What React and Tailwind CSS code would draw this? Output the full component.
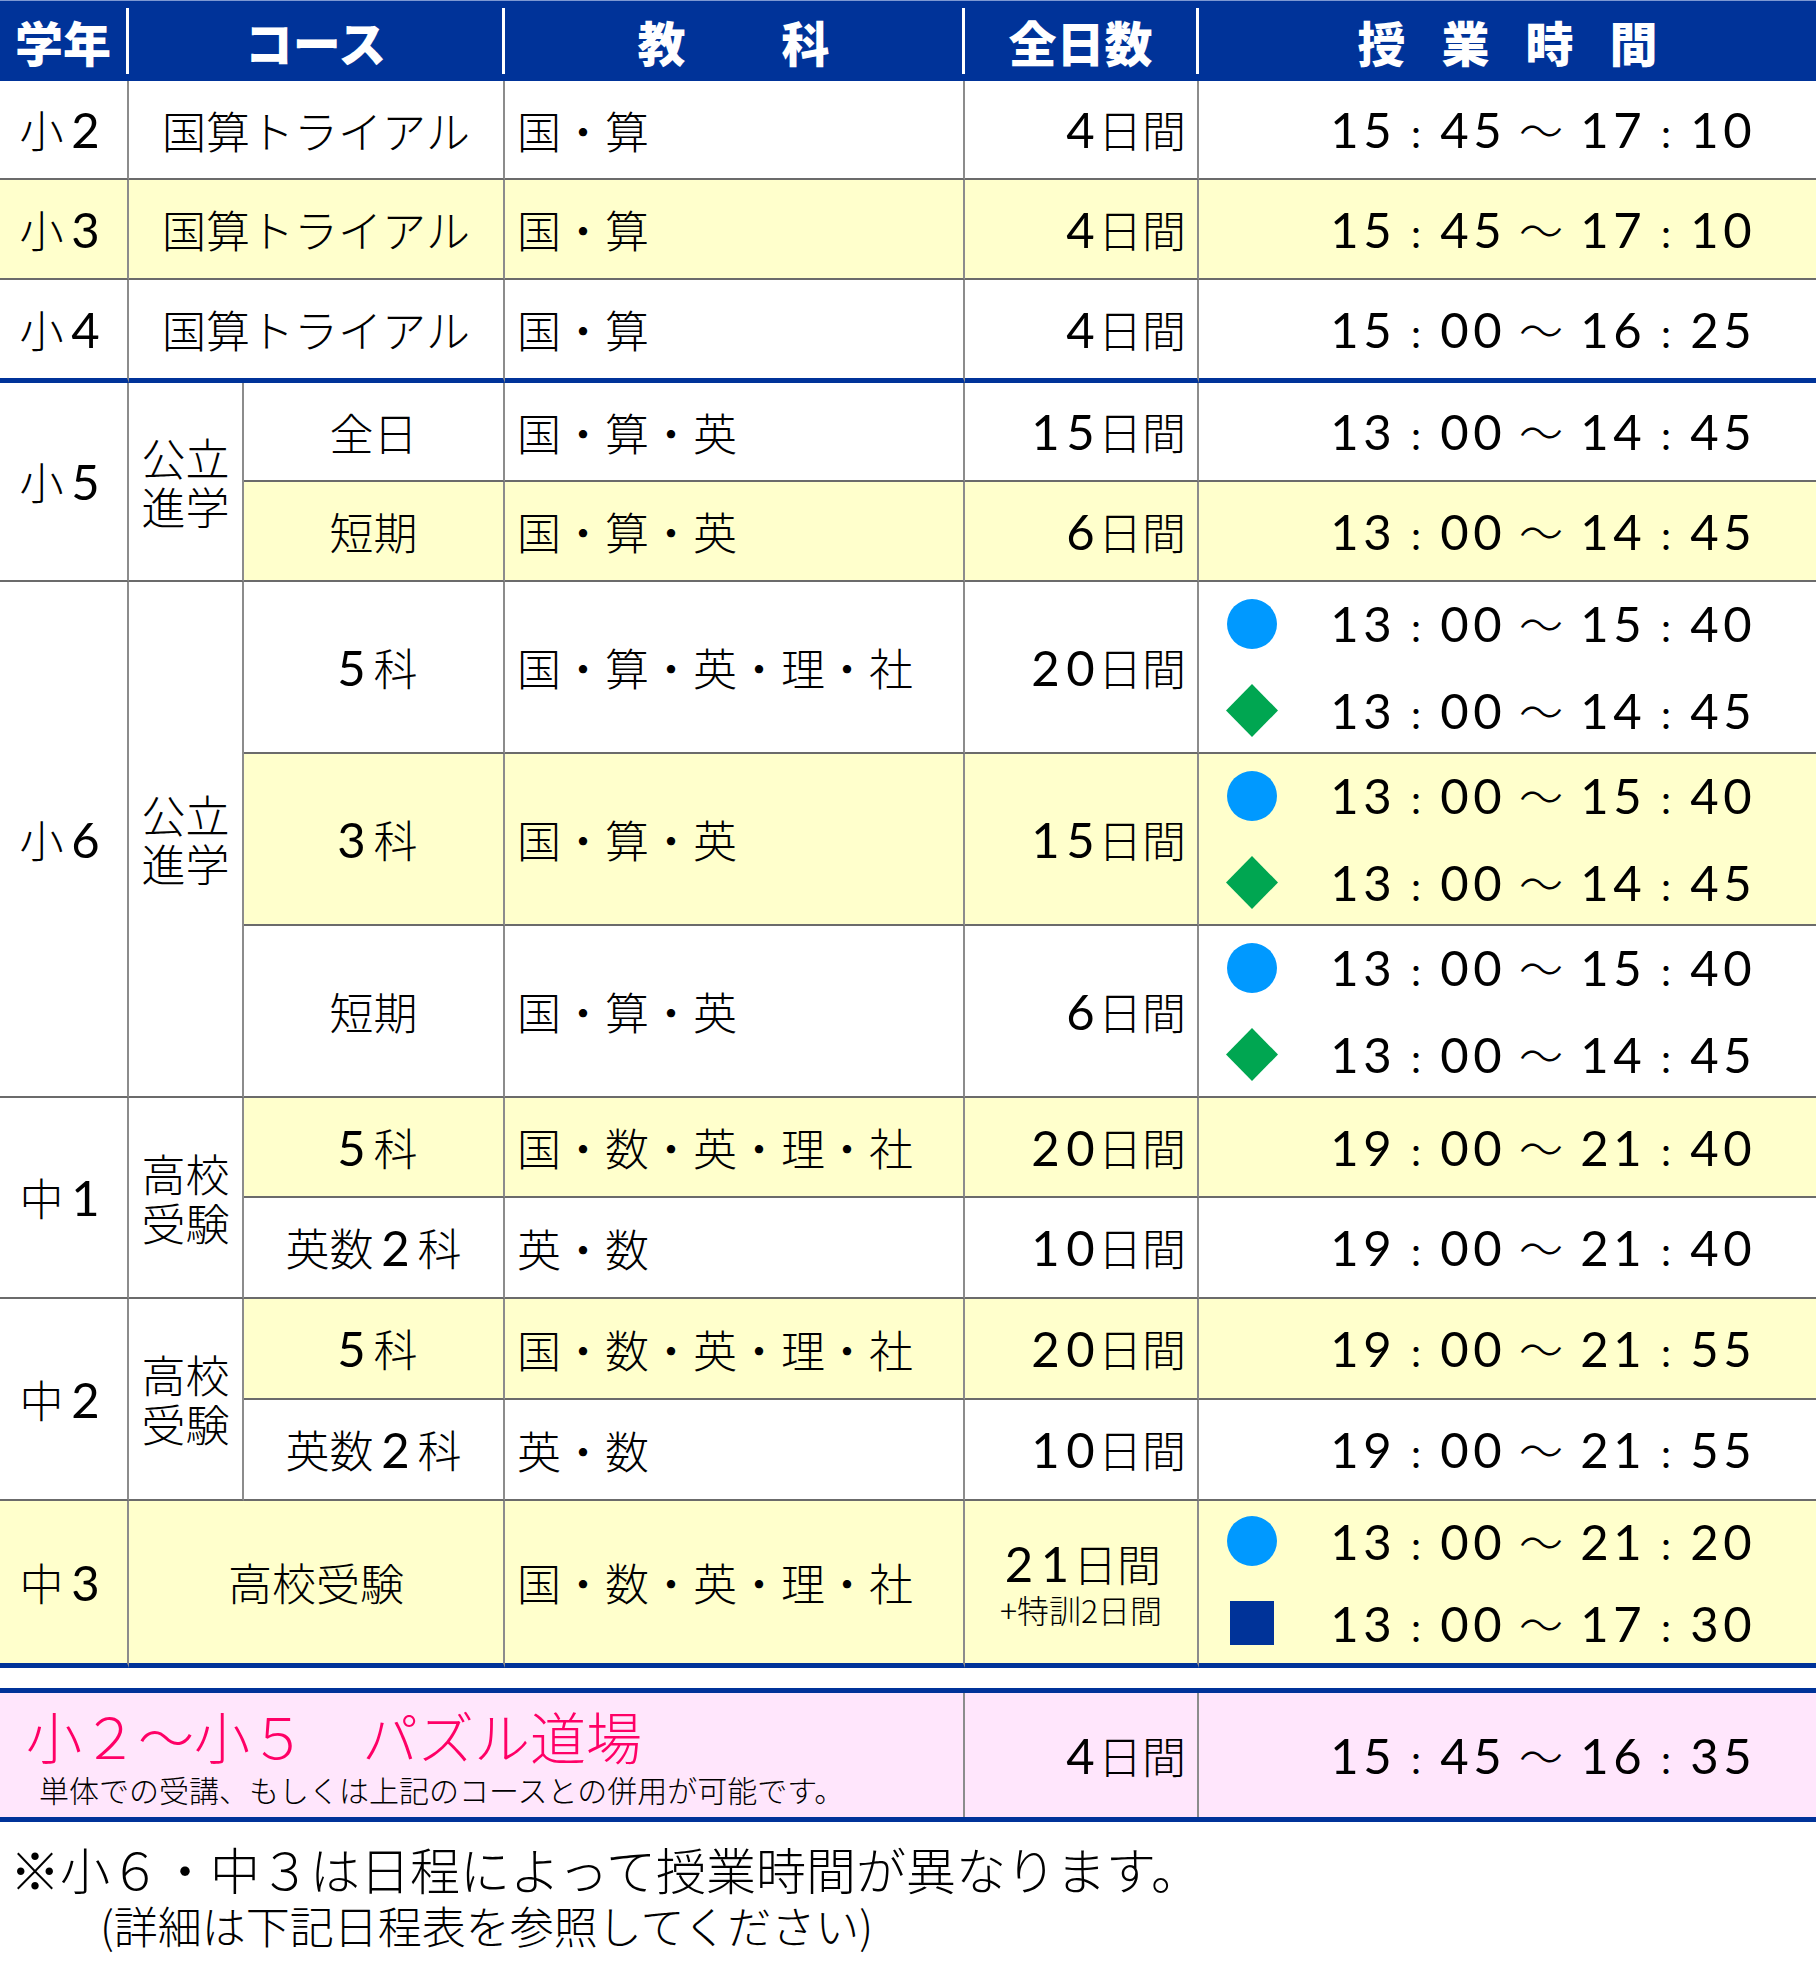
import React from 'react';

const YELLOW = 'bg-[#ffffcc]';

// ASCII digits are drawn in Lato inside fixed boxes, everything else in Noto CJK
function Tx({ s, w }) {
  return (
    <span className="inline-flex items-baseline whitespace-nowrap">
      {s.split('').map((ch, i) =>
        /[0-9]/.test(ch) ? (
          <span key={i} className={`inline-block text-center font-['Lato',sans-serif] font-normal text-[49px] ${w}`}>
            {ch}
          </span>
        ) : (
          <span key={i}>{ch}</span>
        )
      )}
    </span>
  );
}

function Time({ t }) {
  const [a, b] = t.split('-');
  const [h1, m1] = a.split(':');
  const [h2, m2] = b.split(':');
  const pair = (p) =>
    p.split('').map((d, i) => (
      <span key={i} className="inline-block w-[33px] text-center">
        {d}
      </span>
    ));
  const colon = <span className="inline-block w-[44px] text-center text-[40px]">:</span>;
  return (
    <span className="flex items-baseline font-['Lato',sans-serif] font-normal text-[49px] leading-none">
      {pair(h1)}
      {colon}
      {pair(m1)}
      <span className="inline-block w-[74px] text-center font-['Noto_Sans_CJK_JP',sans-serif] font-light text-[44px]">～</span>
      {pair(h2)}
      {colon}
      {pair(m2)}
    </span>
  );
}

function Marker({ type }) {
  return (
    <span className="flex w-[54px] justify-center mr-[49px]">
      {type === 'circle' && <span className="block w-[50px] h-[50px] rounded-full bg-[#0099ff]" />}
      {type === 'diamond' && (
        <svg width="54" height="53" viewBox="0 0 54 53">
          <polygon points="27,0 53,26.5 27,53 1,26.5" fill="#00a651" />
        </svg>
      )}
      {type === 'square' && <span className="block w-[44px] h-[44px] bg-[#003399]" />}
    </span>
  );
}

function C({ span = '', bg = '', blue = false, last = false, className = '', children }) {
  return (
    <div
      className={`${span} ${bg} flex items-center ${
        blue ? 'border-b-[5px] border-b-[#003399]' : 'border-b-2 border-b-[#6b6b6b]'
      } ${last ? '' : 'border-r-2 border-r-[#8c8c8c]'} ${className}`}
    >
      {children}
    </div>
  );
}

const Grade = ({ s, span, bg, blue }) => (
  <C span={span} bg={bg} blue={blue} className="justify-center">
    <Tx s={s} w="w-[44px]" />
  </C>
);

const Course = ({ s, span, bg, blue }) => (
  <C span={span} bg={bg} blue={blue} className="justify-center">
    <Tx s={s} w="w-[44px]" />
  </C>
);

const Stack = ({ a, b, span }) => (
  <C span={span} className="justify-center">
    <div className="flex flex-col items-center leading-[49px]">
      <span>{a}</span>
      <span>{b}</span>
    </div>
  </C>
);

const Subj = ({ s, bg, blue }) => (
  <C bg={bg} blue={blue} className="pl-[12px]">
    <span className="whitespace-nowrap">{s}</span>
  </C>
);

const Days = ({ s, bg, blue }) => (
  <C bg={bg} blue={blue} className="justify-end pr-[11px]">
    <Tx s={s} w="w-[35px]" />
  </C>
);

const One = ({ t, bg, blue }) => (
  <C bg={bg} blue={blue} last className="pl-[26px]">
    <Marker />
    <Time t={t} />
  </C>
);

const Two = ({ items, bg, blue, gap = 'gap-[31px]' }) => (
  <C bg={bg} blue={blue} last className="pl-[26px]">
    <div className={`flex flex-col ${gap}`}>
      {items.map(([m, t], i) => (
        <div key={i} className="flex items-center h-[56px]">
          <Marker type={m} />
          <Time t={t} />
        </div>
      ))}
    </div>
  </C>
);

const SIX = [
  ['circle', '13:00-15:40'],
  ['diamond', '13:00-14:45'],
];

export default function App() {
  return (
    <div className="w-[1816px] h-[1982px] bg-white font-['Noto_Sans_CJK_JP',sans-serif] font-light text-[44px] text-black leading-none">
      {/* header */}
      <div className="flex h-[81px] bg-[#003399] border-t border-t-[#7d98d2] py-[7px] text-white text-[48px] font-black">
        <div className="w-[129px] flex items-center justify-center border-r-[3px] border-r-white">学年</div>
        <div className="w-[376px] flex items-center justify-center border-r-[3px] border-r-white">コース</div>
        <div className="w-[460px] flex items-center justify-center border-r-[3px] border-r-white">教　　科</div>
        <div className="w-[234px] flex items-center justify-center border-r-[3px] border-r-white">全日数</div>
        <div className="w-[617px] flex items-center justify-center pl-[36px] tracking-[36px]">授業時間</div>
      </div>

      {/* body */}
      <div className="grid grid-cols-[129px_115px_261px_460px_234px_617px] grid-rows-[99px_100px_103px_99px_100px_172px_172px_172px_100px_101px_101px_101px_167px]">
        {/* 小2 */}
        <Grade s="小2" />
        <Course s="国算トライアル" span="col-span-2" />
        <Subj s="国・算" />
        <Days s="4日間" />
        <One t="15:45-17:10" />

        {/* 小3 */}
        <Grade s="小3" bg={YELLOW} />
        <Course s="国算トライアル" span="col-span-2" bg={YELLOW} />
        <Subj s="国・算" bg={YELLOW} />
        <Days s="4日間" bg={YELLOW} />
        <One t="15:45-17:10" bg={YELLOW} />

        {/* 小4 */}
        <Grade s="小4" blue />
        <Course s="国算トライアル" span="col-span-2" blue />
        <Subj s="国・算" blue />
        <Days s="4日間" blue />
        <One t="15:00-16:25" blue />

        {/* 小5 */}
        <Grade s="小5" span="row-span-2" />
        <Stack a="公立" b="進学" span="row-span-2" />
        <Course s="全日" />
        <Subj s="国・算・英" />
        <Days s="15日間" />
        <One t="13:00-14:45" />

        <Course s="短期" bg={YELLOW} />
        <Subj s="国・算・英" bg={YELLOW} />
        <Days s="6日間" bg={YELLOW} />
        <One t="13:00-14:45" bg={YELLOW} />

        {/* 小6 */}
        <Grade s="小6" span="row-span-3" />
        <Stack a="公立" b="進学" span="row-span-3" />
        <Course s="5科" />
        <Subj s="国・算・英・理・社" />
        <Days s="20日間" />
        <Two items={SIX} />

        <Course s="3科" bg={YELLOW} />
        <Subj s="国・算・英" bg={YELLOW} />
        <Days s="15日間" bg={YELLOW} />
        <Two items={SIX} bg={YELLOW} />

        <Course s="短期" />
        <Subj s="国・算・英" />
        <Days s="6日間" />
        <Two items={SIX} />

        {/* 中1 */}
        <Grade s="中1" span="row-span-2" />
        <Stack a="高校" b="受験" span="row-span-2" />
        <Course s="5科" bg={YELLOW} />
        <Subj s="国・数・英・理・社" bg={YELLOW} />
        <Days s="20日間" bg={YELLOW} />
        <One t="19:00-21:40" bg={YELLOW} />

        <Course s="英数2科" />
        <Subj s="英・数" />
        <Days s="10日間" />
        <One t="19:00-21:40" />

        {/* 中2 */}
        <Grade s="中2" span="row-span-2" />
        <Stack a="高校" b="受験" span="row-span-2" />
        <Course s="5科" bg={YELLOW} />
        <Subj s="国・数・英・理・社" bg={YELLOW} />
        <Days s="20日間" bg={YELLOW} />
        <One t="19:00-21:55" bg={YELLOW} />

        <Course s="英数2科" />
        <Subj s="英・数" />
        <Days s="10日間" />
        <One t="19:00-21:55" />

        {/* 中3 */}
        <Grade s="中3" bg={YELLOW} blue />
        <Course s="高校受験" span="col-span-2" bg={YELLOW} blue />
        <Subj s="国・数・英・理・社" bg={YELLOW} blue />
        <C bg={YELLOW} blue className="justify-center">
          <div className="flex flex-col items-center">
            <span className="leading-[48px]">
              <Tx s="21日間" w="w-[36px]" />
            </span>
            <span className="text-[32px] leading-[32px] mt-[6px]">+特訓2日間</span>
          </div>
        </C>
        <Two
          items={[
            ['circle', '13:00-21:20'],
            ['square', '13:00-17:30'],
          ]}
          bg={YELLOW}
          blue
          gap="gap-[26px]"
        />
      </div>

      {/* puzzle dojo */}
      <div className="mt-[20px] grid grid-cols-[965px_234px_617px] h-[134px] border-y-[5px] border-y-[#003399] bg-[#ffe6fc]">
        <div className="flex flex-col justify-center border-r-2 border-r-[#8c8c8c]">
          <span className="pl-[26px] text-[56px] leading-[56px] text-[#ff0066] whitespace-nowrap">小２～小５　パズル道場</span>
          <span className="pl-[39px] mt-[11px] text-[30px] leading-[30px] whitespace-nowrap">
            単体での受講、もしくは上記のコースとの併用が可能です。
          </span>
        </div>
        <div className="flex items-center justify-end pr-[11px] border-r-2 border-r-[#8c8c8c]">
          <Tx s="4日間" w="w-[35px]" />
        </div>
        <div className="flex items-center pl-[26px]">
          <Marker />
          <Time t="15:45-16:35" />
        </div>
      </div>

      {/* notes */}
      <p className="mt-[18px] pl-[10px] text-[50px] leading-[56px] whitespace-nowrap">
        ※小６・中３は日程によって授業時間が異なります。
      </p>
      <p className="mt-[3px] pl-[100px] text-[44px] leading-[52px] whitespace-nowrap">
        (詳細は下記日程表を参照してください)
      </p>
    </div>
  );
}
